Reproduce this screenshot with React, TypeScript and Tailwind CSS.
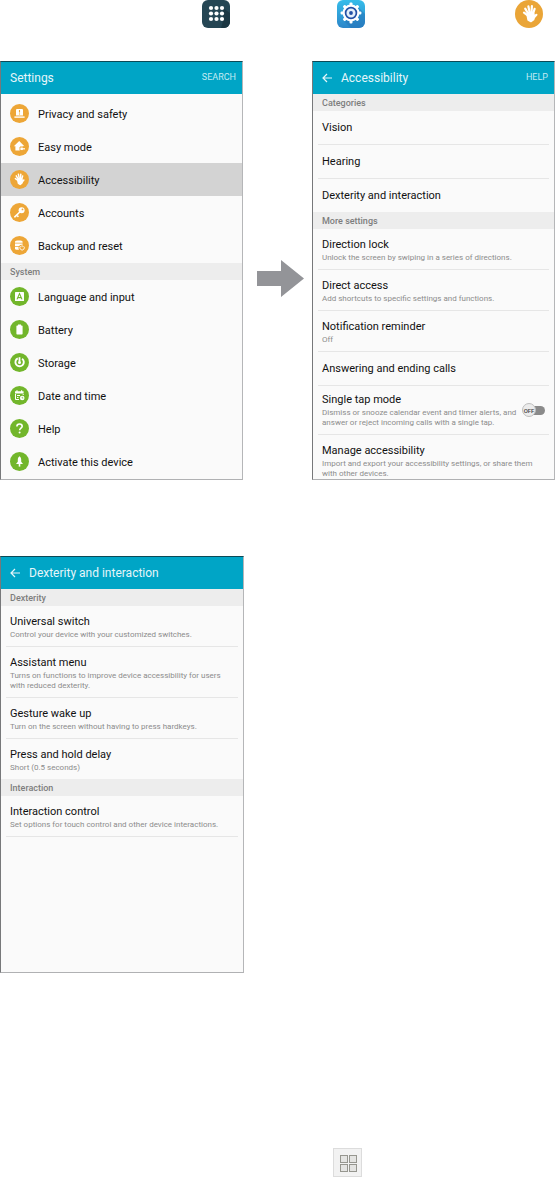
import type { ReactNode } from 'react';

function HandGlyph() {
  return (
    <g stroke="#fff" strokeLinecap="round" strokeWidth="2.2" fill="none">
      <path d="M13.6 16 9 12.6" />
      <path d="M14 15 10.2 8.6" />
      <path d="M15 14 13.4 6.4" />
      <path d="M16.4 14 16.9 6.2" />
      <path d="M17.6 15 19.6 8.8" />
      <path d="M18 18.6 21.4 14.8" />
      <path d="M12.4 14.6 14 12.6h4l1 3-.6 3.8-2.4 1.8-2.6-1.4z" fill="#fff" strokeLinejoin="round" />
    </g>
  );
}

const glyphs: Record<string, ReactNode> = {
  privacy: (
    <>
      <path d="M6 11.4V6a1 1 0 0 1 1-1h5a1 1 0 0 1 1 1v5.4z" fill="#fff" />
      <path d="M4.4 12.4h10.2v1.4H4.4z" fill="#fff" />
      <path d="M9.5 6v2.6M9.5 9.4v1" stroke="#eda637" strokeWidth="1.1" />
    </>
  ),
  easy: (
    <>
      <path d="M9.2 4 3.8 9.2h1.6v4.4h7.4V9.2h1.6z" fill="#fff" />
      <path d="M15.5 10H10v3.6h5.500" stroke="#eda637" strokeWidth="1" fill="none" />
      <path d="M10.6 11.8h4.4" stroke="#fff" strokeWidth="1.2" />
    </>
  ),
  accessibility: (
    <g transform="translate(-0.7 0) scale(0.68)">
      <HandGlyph />
    </g>
  ),
  accounts: (
    <>
      <circle cx="11.6" cy="7.2" r="3" fill="#fff" />
      <circle cx="12.5" cy="6.4" r="0.9" fill="#eda637" />
      <path d="m9.8 9-5 4.8M6.6 12l1.4 1.3" stroke="#fff" strokeWidth="1.6" strokeLinecap="round" />
    </>
  ),
  backup: (
    <>
      <path d="M5 5.6C5 4.8 6.6 4.4 8.8 4.4s3.8.4 3.8 1.2v1.2H5z" fill="#fff" />
      <path d="M5 7.6h7.6v1.2A4 4 0 0 0 9 10H5zM5 10.8h3.6c-.3 1-.2 2 .4 3C6.600 14 5 13.600 5 13z" fill="#fff" />
      <path d="M10.6 10.2a2.2 2.2 0 1 0 3 0M12.1 9.2v2" stroke="#fff" strokeWidth="0.9" fill="none" />
    </>
  ),
  language: (
    <>
      <rect x="5" y="5" width="9" height="9" rx="0.6" fill="#fff" />
      <path d="M7 12.4 9.5 6.6l2.5 5.8M7.8 10.6h3.4" stroke="#72b62b" strokeWidth="1.1" fill="none" />
    </>
  ),
  battery: <path d="M8 4.6h3v1h.9c.4 0 .7.3.7.7v7.4c0 .4-.3.7-.7.7H7.100a.7.7 0 0 1-.7-.7V6.300c0-.4.3-.7.7-.7H8z" fill="#fff" />,
  storage: (
    <>
      <path d="M7.800 5.300a4.200 4.200 0 1 0 4.300.4" stroke="#fff" strokeWidth="1.9" fill="none" />
      <path d="M9.500 4.200v4.600" stroke="#fff" strokeWidth="1.8" />
      <circle cx="9.5" cy="9.5" r="1.5" fill="#fff" />
    </>
  ),
  date: (
    <>
      <path d="M5 5.2h8.6v2.2H5zM6.4 4.2h1.2v1.500H6.400zM11 4.200h1.200v1.500H11z" fill="#fff" />
      <path d="M5.5 8v5.5H9M13.2 8v1M7 9.5h3M7 11.5h1.5" stroke="#fff" strokeWidth="1" fill="none" />
      <circle cx="12.2" cy="12" r="2.3" fill="#fff" />
      <path d="M12.2 10.8v1.3h1.1" stroke="#72b62b" strokeWidth="0.7" fill="none" />
    </>
  ),
  help: (
    <>
      <path d="M6.9 7.5c0-3.4 5.3-3.2 5.3-.2 0 1.7-2.6 2-2.6 4" stroke="#fff" strokeWidth="1.6" fill="none" />
      <circle cx="9.6" cy="13.6" r="1" fill="#fff" />
    </>
  ),
  activate: (
    <>
      <path d="M9.5 4.2c1.2.9 1.7 2.2 1.7 3.6v2l1.8 2.2H6l1.8-2.2v-2c0-1.4.5-2.7 1.7-3.6z" fill="#fff" />
      <path d="M9.5 12v2.6" stroke="#fff" strokeWidth="1.6" />
    </>
  ),
};

const personalItems = [
  { label: 'Privacy and safety', icon: 'privacy' },
  { label: 'Easy mode', icon: 'easy' },
  { label: 'Accessibility', icon: 'accessibility', active: true },
  { label: 'Accounts', icon: 'accounts' },
  { label: 'Backup and reset', icon: 'backup' },
];

const systemItems = [
  { label: 'Language and input', icon: 'language' },
  { label: 'Battery', icon: 'battery' },
  { label: 'Storage', icon: 'storage' },
  { label: 'Date and time', icon: 'date' },
  { label: 'Help', icon: 'help' },
  { label: 'Activate this device', icon: 'activate' },
];

function Panel({ children, className = '' }: { children: ReactNode; className?: string }) {
  return (
    <section className={`min-w-0 border border-t-[#0b4a57] border-l-[#77787a] border-r-[#b5b6b8] border-b-[#b0b1b3] bg-[#fafafa] ${className}`}>
      {children}
    </section>
  );
}

function TitleBar({ title, action, back }: { title: string; action?: string; back?: boolean }) {
  return (
    <header className="flex h-8 items-center bg-[#00a5c6] pr-[6px] pl-[9px] text-[#e6f6fa]">
      {back && (
        <button type="button" aria-label="Back" className="mr-[9px]">
          <svg width="10" height="10" viewBox="0 0 10 10" fill="none" stroke="currentColor" strokeWidth="1.2">
            <path d="M5 1 1 5l4 4M1 5h9" />
          </svg>
        </button>
      )}
      <h2 className="text-[12px]">{title}</h2>
      {action && (
        <button type="button" className="ml-auto text-[9px] text-[#c4ebf3]">
          {action}
        </button>
      )}
    </header>
  );
}

function SectionLabel({ children }: { children: ReactNode }) {
  return <h3 className="h-[17px] bg-[#ededed] pl-[9px] text-[9px] leading-[18px] font-medium text-[#7d7d7d]">{children}</h3>;
}

function IconRow({ label, icon, active, color }: { label: string; icon: string; active?: boolean; color: string }) {
  return (
    <button type="button" className={`flex h-[33px] w-full items-center gap-[9px] pl-[9px] text-left text-[11px] text-[#111] ${active ? 'bg-[#d3d3d3]' : ''}`}>
      <svg width="19" height="19" viewBox="0 0 19 19">
        <circle cx="9.5" cy="9.5" r="9.5" fill={color} />
        {glyphs[icon]}
      </svg>
      <span className="pt-[3px]">{label}</span>
    </button>
  );
}

function TextRow({ title, note, last }: { title: string; note?: string; last?: boolean }) {
  return (
    <div className="px-[5px]">
      <button
        type="button"
        className={`block w-full px-1 text-left ${note ? 'pt-2 pb-[6px]' : 'pt-[9px] pb-2'} ${last ? '' : 'border-b border-[#e6e6e6]'}`}
      >
        <span className="block text-[11px] leading-4 text-[#111]">{title}</span>
        {note && <span className="block text-[8px] leading-[10px] text-[#8c8c8c]">{note}</span>}
      </button>
    </div>
  );
}

function SwitchRow() {
  return (
    <div className="px-[5px]">
      <label className="flex items-center gap-[3px] border-b border-[#e6e6e6] px-1 py-[6px]">
        <span className="min-w-0 flex-1">
          <span className="block text-[11px] leading-4 text-[#111]">Single tap mode</span>
          <span className="block text-[8px] leading-[10px] text-[#8c8c8c]">
            Dismiss or snooze calendar event and timer alerts, and answer or reject incoming calls with a single tap.
          </span>
        </span>
        <span className="relative flex h-[14px] w-[23px] shrink-0 items-center">
          <input type="checkbox" role="switch" aria-label="Single tap mode" className="ml-auto h-[9px] w-4 appearance-none rounded-full bg-[#8a8a8a]" />
          <span className="absolute top-0 left-0 flex size-[14px] items-center justify-center rounded-full border border-[#bdbdbd] bg-[#ececec] text-[6px] font-medium text-[#444]">
            OFF
          </span>
        </span>
      </label>
    </div>
  );
}

export default function App() {
  return (
    <main className="bg-white font-[Roboto,sans-serif]">
      <div className="flex h-7 justify-end pr-3">
        <svg width="28" height="28" viewBox="0 0 28 28" className="mr-[107px]">
          <rect width="28" height="28" rx="6" fill="#254654" />
          <path d="m21 21-2 7h3a6 6 0 0 0 6-6v-9l-7-5z" fill="#1c3743" />
          <g fill="#fff">
            {[8, 13.5, 19].map((y) => [9, 14.5, 20].map((x) => <circle key={`${x}-${y}`} cx={x} cy={y} r="2.1" />))}
          </g>
        </svg>
        <svg width="28" height="28" viewBox="0 0 28 28" className="mr-[150px]">
          <defs>
            <linearGradient id="gear-bg" x1="0" y1="0" x2="0" y2="1">
              <stop offset="0" stopColor="#36bdea" />
              <stop offset="1" stopColor="#2c86c9" />
            </linearGradient>
          </defs>
          <rect width="28" height="28" rx="6" fill="url(#gear-bg)" />
          <path d="m21 7 7 7v8a6 6 0 0 1-6 6h-8l-6-6z" fill="#2474b8" opacity="0.5" />
          <g transform="translate(14 13)">
            <circle r="8.4" fill="#fff" />
            {[0, 45, 90, 135].map((angle) => (
              <rect key={angle} x="-1.5" y="-10.4" width="3" height="20.8" rx="1" fill="#fff" transform={`rotate(${angle})`} />
            ))}
            <circle r="5.4" fill="#e4effa" stroke="#2350a5" strokeWidth="1.7" />
            <circle r="1.9" fill="#2350a5" />
          </g>
        </svg>
        <svg width="28" height="28" viewBox="0 0 28 28">
          <circle cx="14" cy="14" r="14" fill="#eaa537" />
          <HandGlyph />
        </svg>
      </div>

      <div className="mt-[33px] flex">
        <Panel className="flex-1">
          <TitleBar title="Settings" action="SEARCH" />
          <div className="pt-[3px] pb-px">
            {personalItems.map((item) => (
              <IconRow key={item.label} {...item} color="#eda637" />
            ))}
          </div>
          <SectionLabel>System</SectionLabel>
          <div className="pb-px">
            {systemItems.map((item) => (
              <IconRow key={item.label} {...item} color="#72b62b" />
            ))}
          </div>
        </Panel>

        <div className="flex w-[69px] shrink-0 items-center justify-end pr-2">
          <svg width="47" height="37" viewBox="0 0 47 37" className="mt-4">
            <path d="M0 11h24V0l23 18.5L24 37V26H0z" fill="#939498" />
          </svg>
        </div>

        <Panel className="flex-1">
          <TitleBar title="Accessibility" action="HELP" back />
          <SectionLabel>Categories</SectionLabel>
          <TextRow title="Vision" />
          <TextRow title="Hearing" />
          <TextRow title="Dexterity and interaction" last />
          <SectionLabel>More settings</SectionLabel>
          <TextRow title="Direction lock" note="Unlock the screen by swiping in a series of directions." />
          <TextRow title="Direct access" note="Add shortcuts to specific settings and functions." />
          <TextRow title="Notification reminder" note="Off" />
          <TextRow title="Answering and ending calls" />
          <SwitchRow />
          <div className="-mb-2">
            <TextRow title="Manage accessibility" note="Import and export your accessibility settings, or share them with other devices." last />
          </div>
        </Panel>
      </div>

      <Panel className="mt-[76px] min-h-[417px] w-[44%]">
        <TitleBar title="Dexterity and interaction" back />
        <SectionLabel>Dexterity</SectionLabel>
        <TextRow title="Universal switch" note="Control your device with your customized switches." />
        <TextRow title="Assistant menu" note="Turns on functions to improve device accessibility for users with reduced dexterity." />
        <TextRow title="Gesture wake up" note="Turn on the screen without having to press hardkeys." />
        <TextRow title="Press and hold delay" note="Short (0.5 seconds)" last />
        <SectionLabel>Interaction</SectionLabel>
        <TextRow title="Interaction control" note="Set options for touch control and other device interactions." />
      </Panel>

      <div className="mt-[175px] pl-[60%]">
        <svg width="29" height="29" viewBox="0 0 29 29">
          <rect x="0.5" y="0.5" width="28" height="28" fill="#f2f2f2" stroke="#dcdcdc" />
          <g fill="#e4e4e2" stroke="#96968f">
            <rect x="7.5" y="7.5" width="7" height="7" />
            <rect x="16.5" y="7.5" width="7" height="7" />
            <rect x="7.5" y="16.5" width="7" height="7" />
            <rect x="16.5" y="16.5" width="7" height="7" />
          </g>
        </svg>
      </div>
    </main>
  );
}
